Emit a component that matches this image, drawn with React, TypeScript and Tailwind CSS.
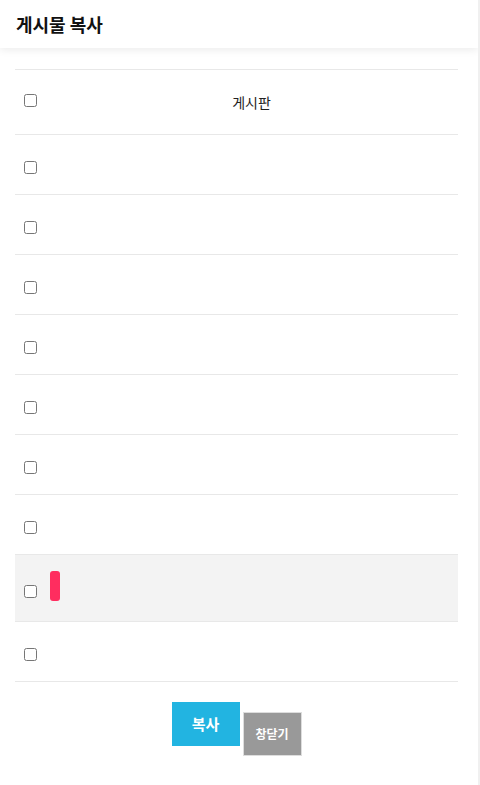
import React from "react";

const rows = [
  { label: "게시판", h: "h-[65px]" },
  { label: "", h: "h-[60px]" },
  { label: "", h: "h-[60px]" },
  { label: "", h: "h-[60px]" },
  { label: "", h: "h-[60px]" },
  { label: "", h: "h-[60px]" },
  { label: "", h: "h-[60px]" },
  { label: "", h: "h-[60px]" },
  { label: "", h: "h-[67px]", active: true },
  { label: "", h: "h-[60px]" },
];

export default function App() {
  return (
    <div
      className="flex min-h-[785px] w-[480px] bg-white text-[#222]"
      style={{ fontFamily: '"Noto Sans CJK KR", "Noto Sans", sans-serif' }}
    >
      <div className="w-[478px]">
        <header className="h-[48px] flex items-center px-4 shadow-[0_2px_8px_rgba(0,0,0,0.08)] bg-white">
          <h1 className="text-[18px] font-bold text-[#111]">게시물 복사</h1>
        </header>
        <main className="pt-[21px] px-[15px] mr-[5px]">
          <table className="w-full border-collapse border-t border-[#e8e8e8]">
            <tbody>
              {rows.map((r, i) => (
                <tr key={i} className={`${r.h} border-b border-[#e8e8e8] ${r.active ? "bg-[#f3f3f3]" : ""}`}>
                  <td className={`w-[35px] pl-[9px] align-middle ${r.label ? "pb-[3px]" : "pt-[6px]"}`}>
                    <input type="checkbox" className="block w-[13px] h-[13px] m-0" />
                  </td>
                  <td className={`align-middle text-[14px] text-center pr-[5px] ${r.active ? "pb-[4px]" : ""}`}>
                    {r.active ? (
                      <div className="w-[10px] h-[30px] rounded-[3px] bg-[#ff2d5f]" />
                    ) : (
                      r.label
                    )}
                  </td>
                </tr>
              ))}
            </tbody>
          </table>
          <div className="flex justify-center items-start gap-[3px] pt-[20px]">
            <button className="w-[68px] h-[44px] bg-[#22b4e1] text-white text-[15px] font-bold">복사</button>
            <button className="mt-[10px] w-[59px] h-[44px] bg-[#999999] border border-[#dddddd] text-white text-[12px] font-bold">
              창닫기
            </button>
          </div>
        </main>
      </div>
      <div className="w-[2px] bg-[#f0f0f0]" />
    </div>
  );
}
